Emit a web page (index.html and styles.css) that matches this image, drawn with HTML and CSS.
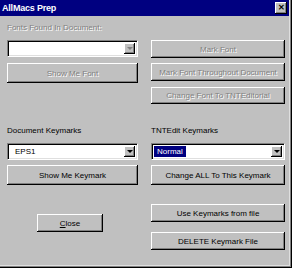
FILE: index.html
```html
<!DOCTYPE html>
<html lang="en">
<head>
    <meta charset="UTF-8">
    <title>AllMacs Prep</title>
    <link rel="stylesheet" href="styles.css">
</head>
<body>
    <div class="window">
        <div class="titlebar">
            <span class="title">AllMacs Prep</span>
            <span class="close-x">&#x2715;</span>
        </div>
        <div class="dialog">
            <div class="col left">
                <div class="label disabled label-top">Fonts Found In Document:</div>
                <div class="combo combo-top">
                    <div class="combo-text"></div>
                    <div class="combo-arrow"><span class="tri off"></span></div>
                </div>
                <div class="btn tall disabled btn-show-font">Show Me Font</div>

                <div class="label label-keys">Document Keymarks</div>
                <div class="combo">
                    <div class="combo-text">EPS1</div>
                    <div class="combo-arrow"><span class="tri"></span></div>
                </div>
                <div class="btn tall btn-keymark">Show Me Keymark</div>

                <div class="btn btn-close"><u>C</u>lose</div>
            </div>

            <div class="col right">
                <div class="btn disabled btn-mark">Mark Font</div>
                <div class="btn disabled btn-mark-all">Mark Font Throughout Document</div>
                <div class="btn disabled btn-change-font">Change Font To TNTEditorial</div>

                <div class="label label-keys">TNTEdit Keymarks</div>
                <div class="combo">
                    <div class="combo-text"><span class="selected">Normal</span></div>
                    <div class="combo-arrow"><span class="tri"></span></div>
                </div>
                <div class="btn tall btn-keymark">Change ALL To This Keymark</div>

                <div class="btn btn-use">Use Keymarks from file</div>
                <div class="btn btn-delete">DELETE Keymark File</div>
            </div>
        </div>
    </div>
</body>
</html>
```

FILE: styles.css
```css
body {
    margin: 0;
    padding: 0;
    background-color: #c0c0c0;
    font-family: 'Liberation Sans', Arial, sans-serif;
    font-size: 8px;
    color: #000;
}

.window {
    width: 292px;
    height: 268px;
    box-sizing: border-box;
    background-color: #c0c0c0;
    border-right: 1px solid #000;
    border-bottom: 1px solid #000;
    box-shadow: inset -1px -1px #808080, inset -2px -2px #dfdfdf;
}

.titlebar {
    display: flex;
    align-items: center;
    justify-content: space-between;
    height: 16px;
    width: 289px;
    background-color: #000080;
    color: white;
    box-sizing: border-box;
    padding: 0 2px 0 2px;
}

.title {
    font-weight: bold;
    font-size: 9px;
    letter-spacing: -0.2px;
}

.close-x {
    display: flex;
    align-items: center;
    justify-content: center;
    width: 12px;
    height: 12px;
    box-sizing: border-box;
    background-color: #c0c0c0;
    color: #000;
    font-size: 8px;
    font-weight: bold;
    line-height: 1;
    box-shadow: inset -1px -1px #000, inset 1px 1px #fff, inset -2px -2px #808080;
}

.dialog {
    display: flex;
    gap: 13px;
    padding-left: 7px;
}

.col {
    display: flex;
    flex-direction: column;
}

.left {
    width: 131px;
}

.right {
    width: 134px;
}

.label {
    height: 10px;
    line-height: 10px;
    white-space: nowrap;
}

.label-top {
    margin-top: 7px;
}

.label-keys {
    margin-top: 22px;
}

.left .label-keys {
    margin-top: 43px;
}

.disabled {
    color: #808080;
    text-shadow: 1px 1px #fff;
}

/* combo boxes */
.combo {
    display: flex;
    height: 17px;
    margin-top: 7px;
    box-sizing: border-box;
    background-color: white;
    border: 1px solid;
    border-color: #808080 #fff #fff #808080;
    box-shadow: inset 1px 1px #000, inset -1px -1px #dfdfdf;
    padding: 2px 2px 2px 2px;
}

.combo-text {
    flex: 1;
    display: flex;
    align-items: center;
    padding-left: 5px;
}

.selected {
    background-color: #000080;
    color: white;
    padding: 0 3px;
    margin-left: -5px;
    line-height: 11px;
}

.combo-arrow {
    width: 11px;
    display: flex;
    align-items: center;
    justify-content: center;
    background-color: #c0c0c0;
    box-shadow: inset -1px -1px #000, inset 1px 1px #fff, inset -2px -2px #808080;
}

.tri {
    width: 0;
    height: 0;
    border-left: 3px solid transparent;
    border-right: 3px solid transparent;
    border-top: 3px solid #000;
}

.tri.off {
    border-top-color: #808080;
}

/* buttons */
.btn {
    display: flex;
    align-items: center;
    justify-content: center;
    height: 18px;
    box-sizing: border-box;
    background-color: #c0c0c0;
    white-space: nowrap;
    box-shadow: inset -1px -1px #000, inset 1px 1px #fff, inset -2px -2px #808080;
}

.btn.tall {
    height: 20px;
}

.btn-show-font {
    margin-top: 6px;
}

.btn-keymark {
    margin-top: 5px;
}

.btn-close {
    margin-top: 29px;
    margin-left: 30px;
    width: 66px;
}

.btn-mark {
    margin-top: 24px;
}

.btn-mark-all {
    margin-top: 5px;
}

.btn-change-font {
    margin-top: 6px;
    height: 17px;
}

.btn-use {
    margin-top: 19px;
}

.btn-delete {
    margin-top: 10px;
}
```
